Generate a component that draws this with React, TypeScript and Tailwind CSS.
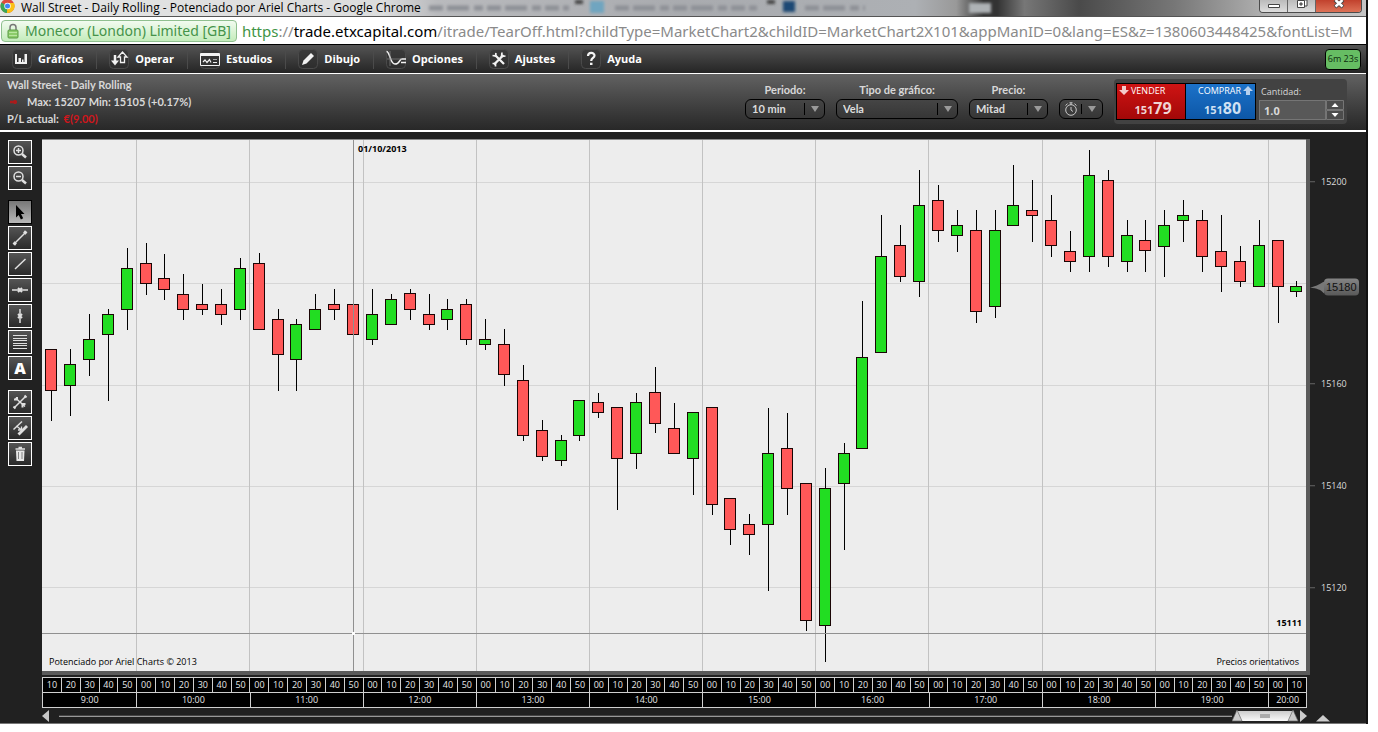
import React from 'react';

type Candle = [up: 0 | 1, high: number, top: number, bottom: number, low: number];

const PLOT_W = 1264;
const PLOT_H = 531;
const PLOT_TOP = 140;

const candles: Candle[] = [
  [0, 349, 349, 390, 420], [1, 349, 364, 385, 415], [1, 314, 339, 359, 375], [1, 309, 314, 334, 400],
  [1, 248, 268, 309, 329], [0, 243, 263, 283, 294], [0, 254, 278, 289, 299], [0, 274, 294, 309, 319],
  [0, 284, 304, 309, 314], [0, 289, 304, 314, 324], [1, 258, 268, 309, 319], [0, 253, 263, 329, 329],
  [0, 309, 319, 354, 390], [1, 319, 324, 359, 390], [1, 294, 309, 329, 329], [0, 289, 304, 309, 319],
  [0, 284, 304, 334, 334], [1, 289, 314, 339, 344], [1, 294, 299, 324, 324], [0, 289, 293, 309, 319],
  [0, 294, 314, 324, 329], [1, 299, 309, 319, 329], [0, 299, 304, 339, 344], [1, 319, 339, 344, 349],
  [0, 329, 344, 374, 385], [0, 365, 380, 435, 440], [0, 420, 430, 456, 460], [1, 435, 440, 460, 465],
  [1, 400, 400, 435, 440], [0, 393, 402, 412, 417], [0, 407, 407, 458, 509], [1, 393, 402, 453, 468],
  [0, 367, 392, 423, 432], [0, 403, 428, 453, 453], [1, 412, 412, 458, 494], [0, 407, 407, 504, 514],
  [0, 498, 498, 529, 544], [0, 514, 524, 534, 554], [1, 408, 453, 524, 590], [0, 413, 448, 488, 514],
  [0, 483, 483, 620, 630], [1, 468, 488, 625, 661], [1, 443, 453, 483, 549], [1, 301, 357, 448, 448],
  [1, 215, 256, 352, 352], [0, 225, 245, 276, 281], [1, 170, 205, 281, 296], [0, 185, 200, 230, 241],
  [1, 210, 225, 235, 251], [0, 210, 230, 311, 322], [1, 210, 230, 306, 317], [1, 165, 205, 225, 225],
  [0, 180, 210, 215, 241], [0, 195, 220, 245, 256], [0, 231, 251, 261, 271], [1, 150, 175, 256, 271],
  [0, 170, 180, 256, 266], [1, 220, 235, 261, 271], [0, 220, 240, 250, 271], [1, 210, 225, 246, 276],
  [1, 200, 215, 220, 241], [0, 210, 220, 256, 271], [0, 215, 251, 266, 291], [0, 246, 261, 281, 286],
  [1, 220, 245, 286, 286], [0, 240, 240, 286, 322], [1, 281, 286, 291, 296],
];

const STEP = PLOT_W / candles.length;
const snap = (x: number) => Math.floor(x + 0.3);
const gridRows = [182, 283, 385, 486, 587];
const priceLabels: [string, number][] = [['15200', 182], ['15160', 384], ['15140', 486], ['15120', 588]];
const toPercent = (y: number) => `${((y - PLOT_TOP + 1) / (PLOT_H + 1)) * 100}%`;
const hours: [string, number][] = [
  ['9:00', 5], ['10:00', 6], ['11:00', 6], ['12:00', 6], ['13:00', 6], ['14:00', 6],
  ['15:00', 6], ['16:00', 6], ['17:00', 6], ['18:00', 6], ['19:00', 6], ['20:00', 2],
];
const minutes = candles.map((_, i) => `${(i + 1) % 6 || ''}0`.padStart(2, '0'));
const hourLines = Array.from({ length: 11 }, (_, i) => 5 + i * 6);

function CandleChart() {
  return (
    <svg className="absolute inset-0 h-full w-full" viewBox={`0 0 ${PLOT_W} ${PLOT_H}`} preserveAspectRatio="none" shapeRendering="crispEdges" role="img" aria-label="Wall Street - Daily Rolling">
      {gridRows.map((y) => <rect key={y} x="0" y={y - PLOT_TOP} width={PLOT_W} height="1" fill="#d6d6d6" />)}
      {hourLines.map((n) => <rect key={n} x={snap(n * STEP)} y="0" width="1" height={PLOT_H} fill="#c2c2c2" />)}
      {candles.map(([up, high, top, bottom, low], i) => {
        const c = snap((i + 0.5) * STEP);
        return (
          <g key={i}>
            <rect x={c} y={high - PLOT_TOP} width="1" height={low - high + 1} fill="#000" />
            <rect x={c - 6} y={top - PLOT_TOP} width="12" height={bottom - top + 1} fill="#1a0505" />
            <rect x={c - 5} y={top + 1 - PLOT_TOP} width="10" height={bottom - top - 1} fill={up ? '#22dd22' : '#ff5858'} />
          </g>
        );
      })}
      <rect x="311" y="0" width="1" height={PLOT_H} fill="#909090" />
      <rect x="0" y={633 - PLOT_TOP} width={PLOT_W} height="1" fill="#909090" />
      <rect x="310" y={632 - PLOT_TOP} width="3" height="3" fill="#fff" />
    </svg>
  );
}

function MenuIcon({ children }: { children: React.ReactNode }) {
  return (
    <svg className="h-5 w-5 shrink-0 overflow-visible" viewBox="0 0 20 20" fill="none" stroke="#f2f2f2" strokeWidth="1.5">
      <rect x="0.5" y="0.5" width="19" height="19" rx="4" fill="#2f2f2f" fillOpacity="0.6" stroke="#4a4a4a" strokeWidth="1" />
      {children}
    </svg>
  );
}

const menu: [string, React.ReactNode][] = [
  ['Gráficos', <g key="i" stroke="none" fill="#f2f2f2"><path d="M3 5h2v8h1.500V9h2.500v4h1v-2.500h1.500V13h1V5H15v10H3z" /></g>],
  ['Operar', <g key="i"><path d="M6 6v6.500" strokeWidth="2.500" /><path d="M2 11.500h8L6 16.500z" fill="#f2f2f2" stroke="none" /><path d="M11.500 13.500V8H9l4.500-5L18 8h-2.500v5.500z" strokeWidth="1.300" /></g>],
  ['Estudios', <g key="i"><path d="M.5 4.500h19v12H.5z" fill="#333" strokeWidth="1" /><path d="M.5 6h19" strokeWidth="2" /><path d="M3 13l2-2 2 2.500 2.500-3 1.500 3M14 10v1M16 10v1M13 13.500h4" strokeWidth="1.200" /></g>],
  ['Dibujo', <path key="i" d="M4 16l1.500-4.500L13 4l3 3-7.500 7.500z" fill="#f2f2f2" stroke="none" />],
  ['Opciones', <g key="i" strokeWidth="1.500"><path d="M.5 2.500C4 2.500 4 15 9 15s4-5 7-5h4M15 13.500h5" /><path d="M4 2v15M1 10h15" stroke="#888" strokeWidth="0.700" /></g>],
  ['Ajustes', <g key="i"><path d="M5 15.500L14.500 6M6 6l9 9" strokeWidth="2.300" /><path d="M3.500 6.500l3 .5.500-3M13 3.500L12.500 7.500l4-.500M3.500 14.500h3v3" strokeWidth="1.700" /></g>],
  ['Ayuda', <g key="i"><path d="M7 7c0-4 6.500-4 6.500-.500 0 2.500-3.300 2.500-3.300 5.500" strokeWidth="2.200" /><path d="M9 13.700h2.500v2.300H9z" fill="#f2f2f2" stroke="none" /></g>],
];

const tools: { label: string; group?: boolean; active?: boolean; icon: React.ReactNode }[] = [
  { label: 'Acercar', icon: <g><circle cx="9.500" cy="9.500" r="4.500" /><path d="M7 9.500h5M9.500 7v5" /><path d="M13 13l4 3.500" strokeWidth="2.500" /></g> },
  { label: 'Alejar', icon: <g><circle cx="9.500" cy="9.500" r="4.500" /><path d="M7 9.500h5" /><path d="M13 13l4 3.500" strokeWidth="2.500" /></g> },
  { label: 'Seleccionar', group: true, active: true, icon: <path d="M7 4v12.500l2.700-2.500 2.200 4.500 2.300-1.200-2.200-4.300h3.500z" fill="#000" stroke="none" /> },
  { label: 'Segmento', icon: <g><path d="M6 16L16.500 5.500" /><path d="M4.500 15.500l2.500 2M15 4.500l2.500 2" strokeWidth="3" /></g> },
  { label: 'Línea', icon: <path d="M6 16L16.500 6" strokeWidth="1.500" /> },
  { label: 'Línea horizontal', icon: <g><path d="M3 11h16" /><path d="M9 9l4 4M13 9l-4 4" strokeWidth="2" /></g> },
  { label: 'Línea vertical', icon: <g><path d="M11 4v14" /><path d="M9 9l4 4M13 9l-4 4" strokeWidth="2" /></g> },
  { label: 'Fibonacci', icon: <path d="M4 4.500h14M4 7.500h14M4 9.500h14M4 12.500h14M4 14.500h14M4 17.500h14" strokeWidth="1" /> },
  { label: 'Texto', icon: <text x="11" y="17" textAnchor="middle" fontSize="16" fontWeight="800" fill="#fff" stroke="none" className="font-['Open_Sans',sans-serif]">A</text> },
  { label: 'Borrar línea', group: true, icon: <g><path d="M6 16L16.500 5.500M6.500 7l9.500 8.500" /><path d="M4.500 15.500l2 2M15.500 4.500l2 2M5 8.500h3M8 6v3M13.500 16.500v-3.500h3" strokeWidth="2" /></g> },
  { label: 'Mover paralela', icon: <g><path d="M4.500 12.500L13 4.500" strokeWidth="1.500" /><path d="M9.500 17.500l8.500-8.500" strokeWidth="2.800" /><path d="M7.500 9l5 4M12.500 9.500V13H9" strokeWidth="1.300" /></g> },
  { label: 'Eliminar', icon: <g><path d="M7 7.500h8.500l-.5 10.500H7.500z" fill="#e8e8e8" stroke="none" /><path d="M6.500 6h9.500M9.500 4.500h3.500" strokeWidth="1.700" /><path d="M9.500 9v7M13 9v7" stroke="#777" strokeWidth="0.900" /></g> },
];

function Arrow() {
  return (
    <span className="pointer-events-none absolute inset-y-1 right-0 flex w-[21px] items-center justify-center border-l border-black">
      <svg className="h-1.5 w-2" viewBox="0 0 8 6"><path d="M0 0h8L4 6z" fill="#9a9a9a" /></svg>
    </span>
  );
}

function Picker({ label, value, className }: { label: string; value: string; className: string }) {
  return (
    <label className={`flex flex-col gap-px text-center ${className}`}>
      <span className="leading-4">{label}</span>
      <span className="relative block">
        <select className="block h-5 w-full appearance-none rounded-md border border-black bg-gradient-to-b from-[#454545] to-[#363636] px-1.5 font-bold text-[#dcdcdc]" defaultValue={value}>
          <option>{value}</option>
        </select>
        <Arrow />
      </span>
    </label>
  );
}

export default function App() {
  return (
    <div className="flex min-h-screen flex-col bg-white pr-2.5 pb-2 font-['Open_Sans','Noto_Sans',sans-serif]">
      <div className="flex flex-1 flex-col border-r-2 border-[#111] bg-[#212121]">
        <header className="flex h-4 items-start justify-between bg-[linear-gradient(90deg,#e4e4e4_0,#dcdddd_28%,#b9babd_32%,#a9abaf_50%,#adb0b4_67%,#999_70%,#333_72%,#333_73%,#777_75%,#4a4a4a_79%,#777_86%,#b4b4b4_93%,#c4c4c4_100%)]">
          <div className="flex items-start gap-[5px]">
            <svg className="h-4 w-4 shrink-0" viewBox="0 0 16 16">
              <circle cx="7.500" cy="6" r="7" fill="#dd4b3e" />
              <path d="M7.500 6L1.400 2.500A7 7 0 0 0 7 13z" fill="#3aa757" />
              <path d="M7.500 6L7 13A7 7 0 0 0 14 3H8z" fill="#fbc116" />
              <circle cx="7.500" cy="6" r="3.200" fill="#fff" />
              <circle cx="7.500" cy="6" r="2.500" fill="#4285f4" />
            </svg>
            <h1 className="font-['Open_Sans',sans-serif] text-xs leading-4 whitespace-nowrap text-black">Wall Street - Daily Rolling - Potenciado por Ariel Charts - Google Chrome</h1>
          </div>
          <svg className="h-4 w-[580px] shrink-0" viewBox="0 0 580 16" aria-hidden="true">
            <defs>
              <filter id="soft" x="-5%" y="-100%" width="110%" height="300%"><feGaussianBlur stdDeviation="1.5" /></filter>
            </defs>
            <g filter="url(#soft)">
              <path d="M8 8h140M194 8h142M384 8h60" stroke="#8d9095" strokeWidth="5" strokeDasharray="14 4 22 5 9 4" />
              <path d="M169 1h14v12h-14z" fill="#6fa5c0" />
              <path d="M362 1h12v11h-12z" fill="#1d4a74" />
              <path d="M154 0h8v4h-8zM346 0h8v4h-8z" fill="#444" />
              <path d="M548 3h22v10h-22z" fill="#aeb2b5" />
            </g>
          </svg>
          <div className="mr-1 ml-auto flex h-[13px] w-[103px] shrink-0 overflow-hidden rounded-b border border-t-0 border-[#4c4c4c]">
            <button aria-label="Minimizar" className="flex w-7 items-center justify-center border-r border-[#666] bg-gradient-to-b from-[#bbb] to-[#ddd]"><svg className="h-2 w-3" viewBox="0 0 12 8"><path d="M.5 2.500h11v3H.5z" fill="#fff" stroke="#444" /></svg></button>
            <button aria-label="Restaurar" className="flex w-7 items-start justify-center border-r border-[#666] bg-gradient-to-b from-[#bbb] to-[#ddd]"><svg className="h-3 w-3" viewBox="0 0 12 12"><path d="M4 0h7v6H9" fill="#fff" stroke="#444" /><path d="M1.500 .5h7v7h-7z" fill="#fff" stroke="#444" /><path d="M4 3h2v2H4z" stroke="#444" fill="#aaa" /></svg></button>
            <button aria-label="Cerrar" className="flex flex-1 items-start justify-center bg-gradient-to-b from-[#c1412d] to-[#dd7257]"><svg className="h-2.5 w-3" viewBox="0 0 12 10"><path d="M2 0l8 7M10 0L2 7" stroke="#444" strokeWidth="4" /><path d="M2.500 0l7 6.500M9.500 0l-7 6.500" stroke="#fff" strokeWidth="2.500" /></svg></button>
          </div>
        </header>

        <div className="flex h-7 shrink-0 items-center gap-[5px] overflow-hidden border-t border-[#555] bg-white pl-px font-['Noto_Sans',sans-serif] whitespace-nowrap">
          <div className="flex h-[22px] shrink-0 items-center gap-1.5 rounded-sm border border-[#8fbf8f] bg-gradient-to-b from-[#f2fbf0] to-[#c4ecbb] px-[5px] text-sm leading-5 text-[#45934a]">
            <svg className="h-4 w-3" viewBox="0 0 12 16"><path d="M3 8V4.500a3 3 0 0 1 6 0V8" fill="none" stroke="#777" strokeWidth="1.500" /><rect x="1" y="7" width="10" height="8" rx="1" fill="#8ccc6a" stroke="#5a9a45" /><path d="M2 9.500h8M2 12.500h8" stroke="#b9e6a0" /></svg>
            Monecor (London) Limited [GB]
          </div>
          <div className="min-w-0 flex-1 overflow-hidden text-[15px] leading-5 text-[#8a8a8a]">
            <span className="text-[#3f9446]">https</span>://<span className="text-black">trade.etxcapital.com</span>/itrade/TearOff.html?childType=MarketChart2&amp;childID=MarketChart2X101&amp;appManID=0&amp;lang=ES&amp;z=1380603448425&amp;fontList=M
          </div>
        </div>

        <nav className="flex h-[30px] shrink-0 items-center justify-between border-t border-b border-t-black border-b-white bg-gradient-to-b from-[#555] to-[#252525] pr-[5px]">
          <div className="flex">
            {menu.map(([label, icon], i) => (
              <button key={label} className={`flex h-5 items-center gap-1.5 pr-[13px] pl-3 text-[11px] leading-4 font-bold text-white ${i < menu.length - 1 ? 'border-r border-[#4b4b4b]' : ''}`}>
                <MenuIcon>{icon}</MenuIcon>{label}
              </button>
            ))}
          </div>
          <div className="flex h-[21px] w-9 items-center justify-center rounded border border-black bg-[#66bd63] text-[9px] text-[#0d2b0d]">6m 23s</div>
        </nav>

        <section className="flex h-[58px] shrink-0 items-start justify-between border-b-2 border-white bg-gradient-to-b from-[#626262] to-[#282828] pr-[19px] font-['Lato','Open_Sans',sans-serif] text-[11px] font-bold text-[#d8d8d8]">
          <div className="pt-0.5 pl-[7px] leading-[17px] whitespace-nowrap">
            <p>Wall Street - Daily Rolling</p>
            <p className="flex items-center"><svg className="mr-2 h-2.5 w-3" viewBox="0 0 12 10"><path d="M3 5h7M8 3v4" stroke="#a81c1c" strokeWidth="2.500" /></svg>Max: 15207 Min: 15105 (+0.17%)</p>
            <p>P/L actual: <span className="ml-0.5 text-[#d0161c]">€(9.00)</span></p>
          </div>
          <div className="flex items-start">
            <div className="flex items-end gap-[11px] pt-2">
              <Picker label="Periodo:" value="10 min" className="w-20" />
              <Picker label="Tipo de gráfico:" value="Vela" className="w-[122px]" />
              <Picker label="Precio:" value="Mitad" className="w-[79px]" />
              <button aria-label="Temporizador" className="relative flex h-5 w-11 items-center rounded-md border border-black bg-gradient-to-b from-[#454545] to-[#363636] pl-1">
                <svg className="h-3.5 w-3.5" viewBox="0 0 14 14" fill="none" stroke="#c8c8c8"><circle cx="7" cy="8" r="5.300" /><path d="M7 5v3l2 1.500M5.500 .8h3M7 .8V3M1.500 3.500L3.500 1.700M12.500 3.500L10.500 1.700" /></svg>
                <Arrow />
              </button>
            </div>
            <div className="mt-[5px] ml-[11px] flex h-[45px] w-[233px] items-start rounded bg-[#424242] py-1 pl-0.5 font-['Open_Sans',sans-serif]">
              <button className="flex h-[37px] w-[70px] flex-col border border-black bg-gradient-to-b from-[#cf1414] to-[#a30808] px-0.5 text-[9px] leading-[14px] font-medium text-white">
                <span className="flex items-center gap-0.5"><svg className="h-2.5 w-2.5" viewBox="0 0 10 10"><path d="M3 0h4v4h3L5 9 0 4h3z" fill="#f4cccc" /></svg>VENDER</span>
                <span className="w-full pl-1 text-center text-[11px] leading-[21px] font-bold text-[#f0d4d4]">151<span className="text-base leading-5">79</span></span>
              </button>
              <button className="flex h-[37px] w-[70px] flex-col border border-l-0 border-black bg-gradient-to-b from-[#1c72c9] to-[#0d57a7] px-0.5 text-[9px] leading-[14px] font-medium text-white">
                <span className="flex items-center justify-end gap-0.5 self-end">COMPRAR<svg className="h-2.5 w-2.5" viewBox="0 0 10 10"><path d="M3 9h4V5h3L5 0 0 5h3z" fill="#b6d0ee" /></svg></span>
                <span className="w-full pl-1 text-center text-[11px] leading-[21px] font-bold text-[#cfe0f2]">151<span className="text-base leading-5">80</span></span>
              </button>
              <label className="ml-[3px] flex flex-col text-[9px] leading-4 font-normal">
                <span className="pl-0.5 leading-[17px]">Cantidad:</span>
                <span className="flex h-5">
                  <input className="h-5 w-[67px] border border-[#757575] bg-[#585858] px-1 text-[11px] font-bold text-[#d8d8d8]" defaultValue="1.0" />
                  <svg className="h-5 w-[18px]" viewBox="0 0 18 20"><path d="M.5.500h17v9H.5zM.5 10.500h17v9H.5z" fill="#4c4c4c" stroke="#757575" /><path d="M5.500 7L9 3l3.500 4zM5.500 13L9 17l3.500-4z" fill="#fff" /></svg>
                </span>
              </label>
            </div>
          </div>
        </section>

        <main className="flex flex-1 flex-col pt-[7px]">
          <div className="flex flex-1">
            <aside className="flex w-[42px] shrink-0 flex-col gap-0.5 pt-px pl-2">
              {tools.map(({ label, group, active, icon }) => (
                <button key={label} aria-label={label} className={`h-6 w-6 border ${group ? 'mt-2' : ''} ${active ? 'border-black bg-gradient-to-b from-[#777] to-[#b8b8b8]' : 'border-white bg-gradient-to-b from-[#555] to-[#2a2a2a]'}`}>
                  <svg className="h-[22px] w-[22px]" viewBox="0 0 22 22" fill="none" stroke="#e0e0e0" strokeWidth="1.500">{icon}</svg>
                </button>
              ))}
            </aside>
            <div className="flex min-w-0 flex-1 border-r-4 border-b-4 border-[#5a5a5a] bg-[#ededed]">
              <div className="relative flex-1 border-t border-[#8a8a8a] text-[9px] text-black">
                <CandleChart />
                <span className="absolute top-0.5 left-[25%] font-bold">01/10/2013</span>
                <span className="absolute right-1 bottom-[42px] font-bold">15111</span>
                <span className="absolute bottom-[3px] left-[7px]">Potenciado por Ariel Charts © 2013</span>
                <span className="absolute right-[7px] bottom-[3px]">Precios orientativos</span>
              </div>
            </div>
            <div className="relative mb-1 w-14 shrink-0 text-[9px] text-[#dcdcdc]">
              {priceLabels.map(([label, y]) => (
                <div key={label} className="absolute left-0 flex -translate-y-1/2 items-center gap-1.5" style={{ top: toPercent(y) }}>
                  <span className="h-px w-[5px] bg-[#666]" />{label}
                </div>
              ))}
              <div className="absolute left-0 flex -translate-y-1/2 items-center" style={{ top: toPercent(287) }}>
                <svg className="h-3 w-3.5" viewBox="0 0 14 12"><path d="M0 6C7 4.500 9 3 14 0v12C11 8 7 7 0 6z" fill="#777" /></svg>
                <span className="rounded-sm bg-gradient-to-b from-[#858585] to-[#595959] px-0.5 font-['Liberation_Sans',sans-serif] text-[11px] leading-[17px] text-[#111]">15180</span>
              </div>
            </div>
          </div>

          <div className="mt-0.5 mr-[59px] ml-[42px] flex flex-col border-t border-l border-[#d0d0d0] bg-black text-center text-[9px] leading-[14px] text-[#e8e8e8]">
            <div className="flex">
              {minutes.map((m, i) => <span key={i} className="min-w-0 flex-1 border-r border-b border-[#d0d0d0]">{m}</span>)}
            </div>
            <div className="grid grid-cols-[repeat(67,minmax(0,1fr))]">
              {hours.map(([h, n]) => <span key={h} className="border-r border-b border-[#d0d0d0]" style={{ gridColumn: `span ${n}` }}>{h}</span>)}
            </div>
          </div>

          <div className="flex h-4 items-center border-b border-[#777] pl-[42px]">
            <svg className="h-3 w-[7px] shrink-0" viewBox="0 0 7 12"><path d="M7 0v12L0 6z" fill="#c8c8c8" /></svg>
            <div className="ml-2.5 h-0.5 flex-1 border-b border-[#999] bg-[#444]" />
            <svg className="h-3 w-[76px] shrink-0" viewBox="0 0 76 12">
              <defs><linearGradient id="grip" x2="0" y2="1"><stop stopColor="#ccc" /><stop offset="1" stopColor="#fafafa" /></linearGradient></defs>
              <path d="M4 1h58v10H4z" fill="url(#grip)" />
              <path d="M5 0L10 11H0zM61 0l5 11H56z" fill="#ccc" stroke="#666" strokeWidth="0.700" />
              <path d="M28 4h10v4H28z" fill="#aaa" />
              <path d="M68 0v12l7-6z" fill="#ccc" />
            </svg>
            <svg className="mr-9 ml-2 h-2 w-3.5 shrink-0 self-end" viewBox="0 0 14 8"><path d="M0 6.500L7 0l7 6.500z" fill="#ccc" /></svg>
          </div>
        </main>
      </div>
    </div>
  );
}
